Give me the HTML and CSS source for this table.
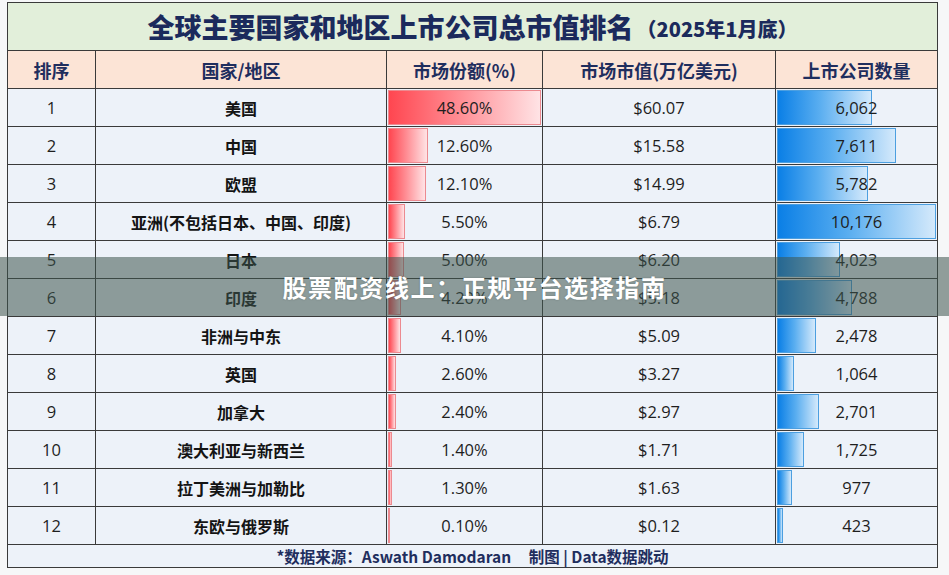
FILE: index.html
```html
<!DOCTYPE html>
<html lang="zh-CN">
<head>
<meta charset="utf-8">
<title>全球主要国家和地区上市公司总市值排名</title>
<link rel="stylesheet" href="styles.css">
</head>
<body>
<div class="sheet">
  <div class="grid">
    <div class="title"><span class="t-main">全球主要国家和地区上市公司总市值排名</span><span class="t-sub">（2025年1月底）</span></div>

    <div class="head">排序</div>
    <div class="head">国家/地区</div>
    <div class="head">市场份额(%)</div>
    <div class="head">市场市值(万亿美元)</div>
    <div class="head">上市公司数量</div>

    <div class="cell num">1</div><div class="cell region">美国</div>
    <div class="cell bar-cell"><div class="bar red" style="width:153px"></div><span class="val">48.60%</span></div>
    <div class="cell num">$60.07</div>
    <div class="cell bar-cell"><div class="bar blue" style="width:95px"></div><span class="val">6,062</span></div>

    <div class="cell num">2</div><div class="cell region">中国</div>
    <div class="cell bar-cell"><div class="bar red" style="width:40px"></div><span class="val">12.60%</span></div>
    <div class="cell num">$15.58</div>
    <div class="cell bar-cell"><div class="bar blue" style="width:119px"></div><span class="val">7,611</span></div>

    <div class="cell num">3</div><div class="cell region">欧盟</div>
    <div class="cell bar-cell"><div class="bar red" style="width:38px"></div><span class="val">12.10%</span></div>
    <div class="cell num">$14.99</div>
    <div class="cell bar-cell"><div class="bar blue" style="width:91px"></div><span class="val">5,782</span></div>

    <div class="cell num">4</div><div class="cell region">亚洲(不包括日本、中国、印度)</div>
    <div class="cell bar-cell"><div class="bar red" style="width:17px"></div><span class="val">5.50%</span></div>
    <div class="cell num">$6.79</div>
    <div class="cell bar-cell"><div class="bar blue" style="width:159px"></div><span class="val">10,176</span></div>

    <div class="cell num">5</div><div class="cell region">日本</div>
    <div class="cell bar-cell"><div class="bar red" style="width:16px"></div><span class="val">5.00%</span></div>
    <div class="cell num">$6.20</div>
    <div class="cell bar-cell"><div class="bar blue" style="width:63px"></div><span class="val">4,023</span></div>

    <div class="cell num">6</div><div class="cell region">印度</div>
    <div class="cell bar-cell"><div class="bar red" style="width:13px"></div><span class="val">4.20%</span></div>
    <div class="cell num">$5.18</div>
    <div class="cell bar-cell"><div class="bar blue" style="width:75px"></div><span class="val">4,788</span></div>

    <div class="cell num">7</div><div class="cell region">非洲与中东</div>
    <div class="cell bar-cell"><div class="bar red" style="width:13px"></div><span class="val">4.10%</span></div>
    <div class="cell num">$5.09</div>
    <div class="cell bar-cell"><div class="bar blue" style="width:39px"></div><span class="val">2,478</span></div>

    <div class="cell num">8</div><div class="cell region">英国</div>
    <div class="cell bar-cell"><div class="bar red" style="width:8px"></div><span class="val">2.60%</span></div>
    <div class="cell num">$3.27</div>
    <div class="cell bar-cell"><div class="bar blue" style="width:17px"></div><span class="val">1,064</span></div>

    <div class="cell num">9</div><div class="cell region">加拿大</div>
    <div class="cell bar-cell"><div class="bar red" style="width:8px"></div><span class="val">2.40%</span></div>
    <div class="cell num">$2.97</div>
    <div class="cell bar-cell"><div class="bar blue" style="width:42px"></div><span class="val">2,701</span></div>

    <div class="cell num">10</div><div class="cell region">澳大利亚与新西兰</div>
    <div class="cell bar-cell"><div class="bar red" style="width:4px"></div><span class="val">1.40%</span></div>
    <div class="cell num">$1.71</div>
    <div class="cell bar-cell"><div class="bar blue" style="width:27px"></div><span class="val">1,725</span></div>

    <div class="cell num">11</div><div class="cell region">拉丁美洲与加勒比</div>
    <div class="cell bar-cell"><div class="bar red" style="width:4px"></div><span class="val">1.30%</span></div>
    <div class="cell num">$1.63</div>
    <div class="cell bar-cell"><div class="bar blue" style="width:15px"></div><span class="val">977</span></div>

    <div class="cell num">12</div><div class="cell region">东欧与俄罗斯</div>
    <div class="cell bar-cell"><div class="bar red" style="width:1px"></div><span class="val">0.10%</span></div>
    <div class="cell num">$0.12</div>
    <div class="cell bar-cell"><div class="bar blue" style="width:6px"></div><span class="val">423</span></div>

    <div class="foot">*数据来源：Aswath Damodaran&nbsp;&nbsp;&nbsp;&nbsp;&nbsp;制图 | Data数据跳动</div>
  </div>
</div>
<div class="banner">股票配资线上：正规平台选择指南</div>
</body>
</html>
```

FILE: styles.css
```css
html, body {
  margin: 0;
  padding: 0;
}

body {
  background: #f6f7f8;
  font-family: "Open Sans", "Noto Sans CJK SC", sans-serif;
  color: #1e1e1e;
  position: relative;
  width: 949px;
  height: 575px;
  overflow: hidden;
}

.sheet {
  padding: 2px 0 0 7px;
}

.grid {
  display: grid;
  box-sizing: border-box;
  width: 931px;
  padding: 1px;
  gap: 1px;
  background: #3a3a3a;
  grid-template-columns: 87px 290px 155px 232px 161px;
  grid-template-rows: 47px 37px repeat(12, 37px) 22px;
}

.title {
  grid-column: 1 / -1;
  background: #e2efda;
  display: flex;
  align-items: center;
  justify-content: center;
  color: #1b2a5c;
  font-family: "Noto Sans CJK SC", sans-serif;
  font-weight: 900;
}

.t-main {
  font-size: 27px;
}

.t-sub {
  font-size: 20px;
  margin-left: 3px;
  padding-top: 3px;
}

.head {
  background: #fce4d6;
  display: flex;
  align-items: center;
  justify-content: center;
  color: #1f2e5e;
  font-family: "Noto Sans CJK SC", sans-serif;
  font-weight: 700;
  font-size: 18px;
}

.cell {
  background: #edf2f9;
  display: flex;
  align-items: center;
  justify-content: center;
  font-size: 16.5px;
  color: #1e1e1e;
}

.region {
  font-family: "Noto Sans CJK SC", sans-serif;
  font-weight: 700;
  font-size: 16px;
  color: #141414;
}

.bar-cell {
  display: grid;
  grid-template-columns: 1fr;
  grid-template-rows: 1fr;
  align-items: stretch;
}

.bar-cell > * {
  grid-area: 1 / 1;
}

.bar {
  justify-self: start;
  box-sizing: border-box;
  margin: 1px 0 1px 1px;
}

.bar.red {
  background: linear-gradient(to right, #ff4650 0%, #ff8b92 45%, #ffe3e5 100%);
  border: 1px solid #ec8a90;
}

.bar.blue {
  background: linear-gradient(to right, #0a7fe6 0%, #5aaef0 45%, #d4e9fb 100%);
  border: 1px solid #4c9fe0;
}

.val {
  align-self: center;
  justify-self: center;
  position: relative;
}

.foot {
  grid-column: 1 / -1;
  background: #edf2f9;
  display: flex;
  align-items: center;
  justify-content: center;
  color: #1f2e5e;
  font-family: "Noto Sans CJK SC", sans-serif;
  font-weight: 700;
  font-size: 15.5px;
  white-space: pre;
}

.banner {
  position: absolute;
  left: 0;
  right: 0;
  top: 257px;
  height: 59px;
  background: rgba(60, 83, 77, 0.55);
  color: #ffffff;
  display: flex;
  align-items: center;
  justify-content: center;
  font-family: "Noto Sans CJK SC", sans-serif;
  font-weight: 700;
  font-size: 24px;
  letter-spacing: 1.6px;
  text-shadow: 0 0 2px rgba(0, 0, 0, 0.25);
}
```
